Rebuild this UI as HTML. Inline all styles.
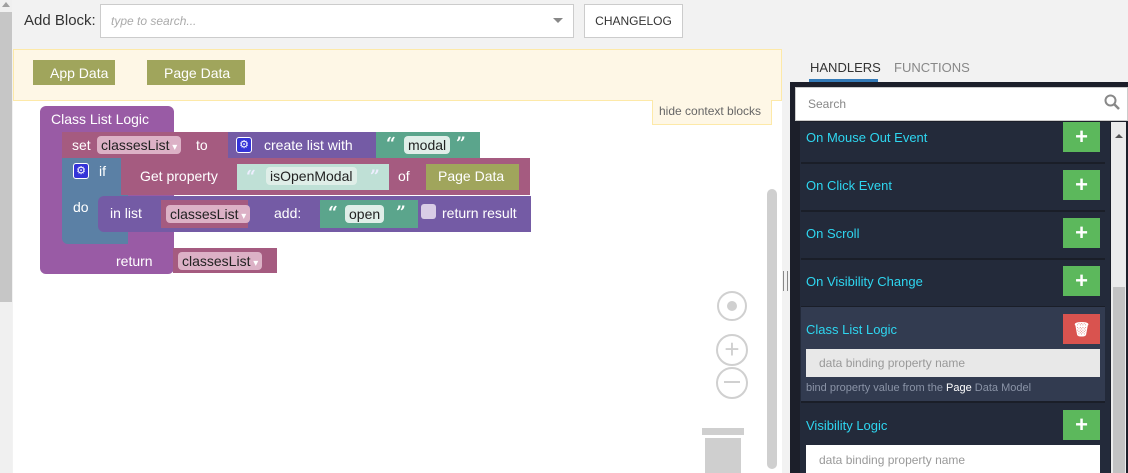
<!DOCTYPE html>
<html><head><style>
*{box-sizing:border-box;margin:0;padding:0}
body{width:1128px;height:473px;background:#f2f2f2;font-family:"Liberation Sans",Arial,sans-serif;position:relative;overflow:hidden}
.a{position:absolute}
.bt{color:#fff;font-size:14px;line-height:1}
.dd{position:absolute;background:#dcb1c6;border-radius:4px;color:#222;font-size:14px;padding:2px 4px}
.dd:after{content:" \25BE";color:#fff;font-size:10px}
.str{position:absolute;background:#dfeee8;border-radius:4px;color:#222;font-size:14px;padding:2px 4px}
.q{position:absolute;color:#fff;font-size:17px;font-weight:bold;font-family:"DejaVu Serif",serif}
.item{position:absolute;left:801px;width:304px;border-bottom:2px solid #1a1e28}
.lbl{position:absolute;left:806px;color:#2ed6f0;font-size:13px}
.plus{position:absolute;left:1063px;width:37px;height:30px;background:#5cb85c;color:#fff;font-size:22px;font-weight:bold;text-align:center;line-height:30px}
.gear{position:absolute;width:16px;height:16px;background:#3434d8;border-radius:3px;border:1px solid #fff;color:#fff;font-size:11px;text-align:center;line-height:14px}
</style></head><body>
<div class="a" style="left:0;top:0;width:12px;height:473px;background:#f0f0f0"></div>
<div class="a" style="left:0;top:12px;width:12px;height:290px;background:#c6c6c6"></div>
<div class="a" style="left:2px;top:2px;width:0;height:0;border-left:4px solid transparent;border-right:4px solid transparent;border-bottom:5px solid #a0a0a0"></div>

<div class="a" style="left:24px;top:12px;font-size:15px;color:#333">Add Block:</div>
<div class="a" style="left:100px;top:4px;width:474px;height:34px;background:#fff;border:1px solid #ccc"></div>
<div class="a" style="left:111px;top:14px;font-size:12px;font-style:italic;color:#aaa">type to search...</div>
<div class="a" style="left:553px;top:18px;border-left:5px solid transparent;border-right:5px solid transparent;border-top:5px solid #888"></div>
<div class="a" style="left:584px;top:4px;width:99px;height:34px;background:#fff;border:1px solid #ccc;font-size:12px;color:#333;text-align:center;line-height:32px">CHANGELOG</div>

<div class="a" style="left:13px;top:49px;width:769px;height:424px;background:#fff"></div>
<div class="a" style="left:13px;top:49px;width:769px;height:52px;background:#fef7e6;border:1px solid #fde9a8"></div>
<div class="a" style="left:652px;top:100px;width:120px;height:25px;background:#fef7e6;border:1px solid #fde9a8;border-top:none;font-size:12px;color:#666;padding:4px 0 0 6px">hide context blocks</div>

<div class="a" style="left:33px;top:60px;width:82px;height:25px;background:#a0a55c"></div>
<div class="a bt" style="left:50px;top:66px">App Data</div>
<div class="a" style="left:147px;top:60px;width:98px;height:25px;background:#a0a55c"></div>
<div class="a bt" style="left:164px;top:66px">Page Data</div>

<div class="a" style="left:40px;top:106px;width:134px;height:168px;background:#995ba5;border-radius:6px"></div>
<div class="a bt" style="left:51px;top:112px">Class List Logic</div>
<div class="a bt" style="left:116px;top:254px">return</div>
<div class="a" style="left:173px;top:248px;width:104px;height:25px;background:#a55b80"></div>
<div class="dd" style="left:178px;top:252px;padding:1px 4px">classesList</div>

<div class="a" style="left:62px;top:132px;width:168px;height:26px;background:#a55b80"></div>
<div class="a bt" style="left:72px;top:138px">set</div>
<div class="dd" style="left:97px;top:136px;padding:1px 4px">classesList</div>
<div class="a bt" style="left:196px;top:138px">to</div>
<div class="a" style="left:228px;top:132px;width:148px;height:26px;background:#745ba5"></div>
<div class="gear" style="left:236px;top:137px">⚙</div>
<div class="a bt" style="left:264px;top:138px">create list with</div>
<div class="a" style="left:376px;top:132px;width:104px;height:26px;background:#5ba58c"></div>
<div class="q" style="left:386px;top:134px">“</div>
<div class="str" style="left:404px;top:136px;padding:1px 4px">modal</div>
<div class="q" style="left:456px;top:134px">”</div>

<div class="a" style="left:62px;top:158px;width:66px;height:86px;background:#5b80a5;border-radius:0 0 0 6px"></div>
<div class="gear" style="left:73px;top:163px">⚙</div>
<div class="a bt" style="left:99px;top:164px">if</div>
<div class="a bt" style="left:73px;top:200px">do</div>
<div class="a" style="left:121px;top:158px;width:409px;height:37px;background:#a55b80"></div>
<div class="a bt" style="left:140px;top:169px">Get property</div>
<div class="a" style="left:237px;top:164px;width:152px;height:26px;background:#bfe0d6"></div>
<div class="q" style="left:246px;top:167px;color:#eef">“</div>
<div class="str" style="left:266px;top:167px;padding:1px 4px">isOpenModal</div>
<div class="q" style="left:370px;top:167px;color:#eef">”</div>
<div class="a bt" style="left:398px;top:169px">of</div>
<div class="a" style="left:426px;top:164px;width:93px;height:26px;background:#a0a55c"></div>
<div class="a bt" style="left:438px;top:169px">Page Data</div>

<div class="a" style="left:98px;top:196px;width:433px;height:36px;background:#745ba5;border-radius:6px 0 0 6px"></div>
<div class="a bt" style="left:110px;top:206px">in list</div>
<div class="a" style="left:161px;top:200px;width:87px;height:28px;background:#a55b80"></div>
<div class="dd" style="left:166px;top:205px;padding:1px 4px">classesList</div>
<div class="a bt" style="left:274px;top:206px">add:</div>
<div class="a" style="left:320px;top:200px;width:98px;height:28px;background:#5ba58c"></div>
<div class="q" style="left:328px;top:203px">“</div>
<div class="str" style="left:345px;top:205px;padding:1px 4px">open</div>
<div class="q" style="left:396px;top:203px">”</div>
<div class="a" style="left:421px;top:204px;width:15px;height:15px;background:#d9cce6;border-radius:3px"></div>
<div class="a bt" style="left:442px;top:206px">return result</div>

<div class="a" style="left:767px;top:189px;width:10px;height:280px;background:#cfcfcf;border-radius:5px"></div>
<div class="a" style="left:717px;top:291px;width:30px;height:30px;border:2px solid #d0d0d0;border-radius:50%"></div>
<div class="a" style="left:727px;top:301px;width:10px;height:10px;background:#d0d0d0;border-radius:50%"></div>
<div class="a" style="left:716px;top:334px;width:32px;height:32px;border:2px solid #d0d0d0;border-radius:50%;color:#d0d0d0;text-align:center;font-size:26px;line-height:26px">+</div>
<div class="a" style="left:716px;top:367px;width:32px;height:32px;border:2px solid #d0d0d0;border-radius:50%"></div>
<div class="a" style="left:724px;top:381px;width:16px;height:2px;background:#d0d0d0"></div>
<div class="a" style="left:702px;top:428px;width:42px;height:7px;background:#cfcfcf"></div>
<div class="a" style="left:705px;top:438px;width:36px;height:35px;background:#cfcfcf"></div>
<div class="a" style="left:783px;top:271px;width:5px;height:20px;border-left:1px solid #888;border-right:1px solid #888"></div>

<div class="a" style="left:810px;top:60px;font-size:13px;color:#333">HANDLERS</div>
<div class="a" style="left:809px;top:79px;width:69px;height:3px;background:#337ab7"></div>
<div class="a" style="left:894px;top:60px;font-size:13px;color:#888">FUNCTIONS</div>
<div class="a" style="left:790px;top:82px;width:338px;height:391px;background:#1c1f2a"></div>
<div class="a" style="left:795px;top:87px;width:333px;height:34px;background:#fff;border:1px solid #ccc"></div>
<div class="a" style="left:808px;top:97px;font-size:12px;color:#888">Search</div>
<svg class="a" style="left:1104px;top:94px" width="16" height="16"><circle cx="6.5" cy="6.5" r="5" stroke="#888" stroke-width="2" fill="none"/><line x1="10" y1="10" x2="15" y2="15" stroke="#888" stroke-width="2.5"/></svg>
<div class="a" style="left:800px;top:122px;width:310px;height:351px;background:#232a3a"></div>
<div class="a" style="left:1111px;top:122px;width:15px;height:351px;background:#ebebeb"></div>
<div class="a" style="left:1113px;top:287px;width:12px;height:186px;background:#c2c2c2"></div>
<div class="a" style="left:1115px;top:134px;border-left:4px solid transparent;border-right:4px solid transparent;border-bottom:4px solid #555"></div>

<div class="item" style="top:122px;height:42px"></div>
<div class="lbl" style="top:130px">On Mouse Out Event</div><div class="plus" style="top:122px">+</div>
<div class="item" style="top:164px;height:48px"></div>
<div class="lbl" style="top:178px">On Click Event</div><div class="plus" style="top:170px">+</div>
<div class="item" style="top:212px;height:48px"></div>
<div class="lbl" style="top:226px">On Scroll</div><div class="plus" style="top:218px">+</div>
<div class="item" style="top:260px;height:48px"></div>
<div class="lbl" style="top:274px">On Visibility Change</div><div class="plus" style="top:266px">+</div>
<div class="item" style="top:307px;height:96px;background:#323b50"></div>
<div class="lbl" style="top:322px">Class List Logic</div>
<div class="plus" style="top:314px;background:#d9534f;font-size:14px">🗑</div>
<div class="a" style="left:806px;top:349px;width:294px;height:28px;background:#e8e8e8;font-size:12px;color:#999;padding:7px 0 0 13px">data binding property name</div>
<div class="a" style="left:806px;top:382px;font-size:11px;color:#8a93a6">bind property value from the <span style="color:#fff">Page</span> Data Model</div>
<div class="lbl" style="top:418px">Visibility Logic</div><div class="plus" style="top:410px">+</div>
<div class="a" style="left:806px;top:445px;width:294px;height:28px;background:#fff;font-size:12px;color:#999;padding:8px 0 0 13px">data binding property name</div>
</body></html>
